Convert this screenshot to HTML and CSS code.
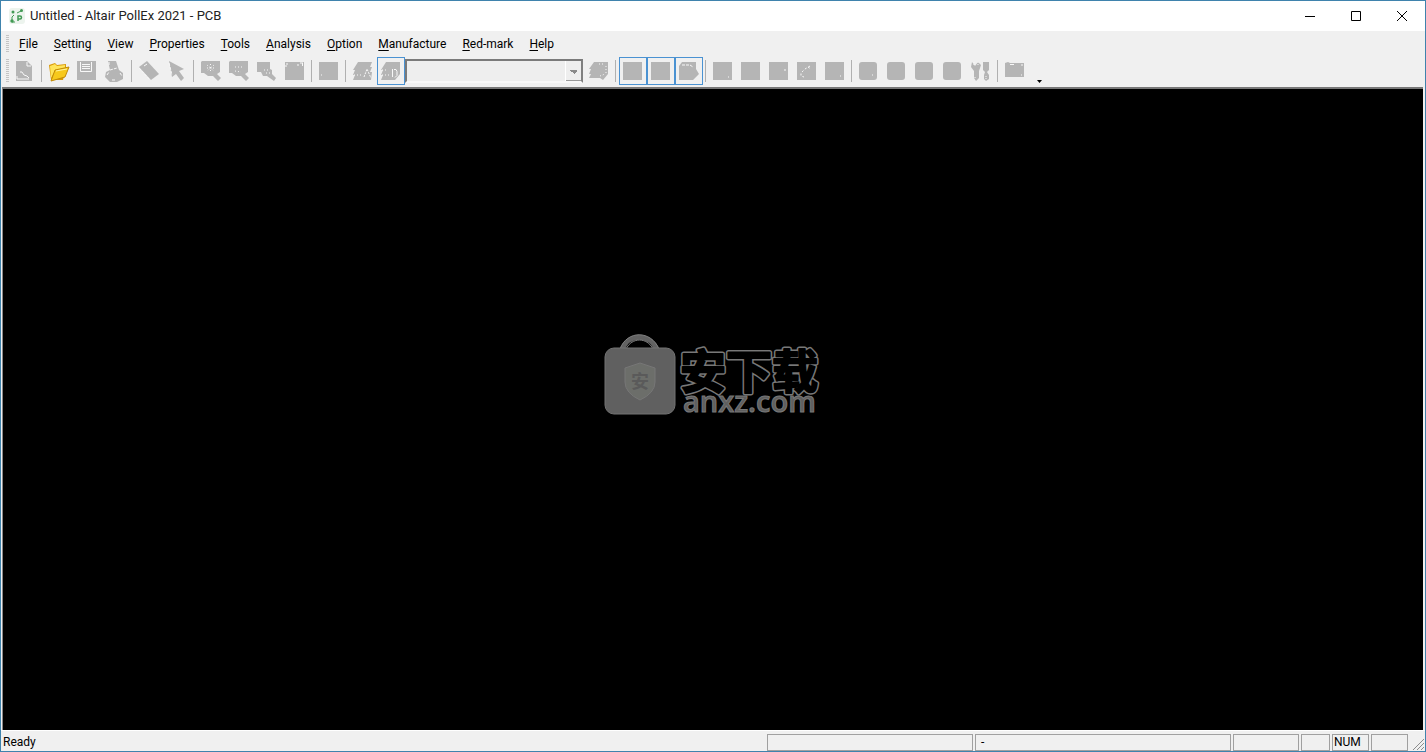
FILE: index.html
```
<!DOCTYPE html>
<html lang="en">
<head>
<meta charset="utf-8">
<title>Untitled - Altair PollEx 2021 - PCB</title>
<link rel="stylesheet" href="styles.css">
</head>
<body>
<svg class="defs" aria-hidden="true">
  <defs>
    <g id="square"><path d="M1 1h19v18H1z"/></g>
    <g id="rounded"><rect x="1" y="1" width="18" height="18" rx="3"/></g>
    <g id="magnifier"><path d="M2 0h18v11l-3 2 4 4-3 3-5-5H8l-4-3H1V1z"/></g>
  </defs>
</svg>
<div class="window">
  <header class="titlebar">
    <svg class="app-icon" viewBox="0 0 16 16" aria-hidden="true">
      <rect width="16" height="16" rx="3" fill="#edf4ee"/>
      <g fill="#439a55"><circle cx="4" cy="4" r="1.500"/><circle cx="12.500" cy="2.500" r="1.500"/><circle cx="3" cy="13" r="1.700"/></g>
      <path d="M12 3 8 5M3 12V9l2-2M3 14h3" fill="none" stroke="#439a55"/>
      <path d="M9 13V8h2a1.500 1.500 0 0 1 0 3H9" fill="none" stroke="#439a55" stroke-width="1.500"/>
    </svg>
    <h1 class="title">Untitled - Altair PollEx 2021 - PCB</h1>
    <div class="caption-buttons">
      <button class="caption" aria-label="Minimize"><svg viewBox="0 0 12 12"><path d="M1 6.500h10"/></svg></button>
      <button class="caption" aria-label="Maximize"><svg viewBox="0 0 12 12"><path d="M1.500 1.500h9v9h-9z"/></svg></button>
      <button class="caption" aria-label="Close"><svg viewBox="0 0 12 12"><path d="m1 1 10 10M11 1 1 11"/></svg></button>
    </div>
  </header>

  <nav class="menubar" aria-label="Main menu">
    <span class="gripper"></span>
    <button class="menu"><u>F</u>ile</button>
    <button class="menu"><u>S</u>etting</button>
    <button class="menu"><u>V</u>iew</button>
    <button class="menu"><u>P</u>roperties</button>
    <button class="menu"><u>T</u>ools</button>
    <button class="menu"><u>A</u>nalysis</button>
    <button class="menu"><u>O</u>ption</button>
    <button class="menu"><u>M</u>anufacture</button>
    <button class="menu"><u>R</u>ed-mark</button>
    <button class="menu"><u>H</u>elp</button>
  </nav>

  <div class="toolbar" role="toolbar" aria-label="Standard">
    <span class="gripper"></span>
    <button class="tool" disabled aria-label="New"><svg viewBox="0 0 22 22"><path d="M2 0h11l5 5v15H2z"/><path class="hi" d="M13 1v4h4M3 15v3h12M6 11h2l2 3 3 1 2 2"/></svg></button>
    <span class="sep"></span>
    <button class="tool" aria-label="Open">
      <svg viewBox="0 0 22 22"><path d="M1 4l6-2 2 2 9-1v5l-3 11H3z" fill="#d99a08"/><path d="M2 5l5-2 2 2 8-1v4L7 10 3 17z" fill="#ffe45a"/><path d="M7 9l14-3-4 10-14 4z" fill="#f7c91c" stroke="#c18a08"/><path d="M8 10l11-2" stroke="#fff5a2" fill="none"/></svg>
    </button>
    <button class="tool" disabled aria-label="Save"><svg viewBox="0 0 22 22"><path d="M1 0h19v19H1z"/><path class="hi" d="M4.500 1v9.500h11V1M6 3.500h8M6 5.500h8M6 7.500h8"/></svg></button>
    <button class="tool" disabled aria-label="Print"><svg viewBox="0 0 22 22"><path d="M4 0h8l3 9 4 3v6l-6 3H6l-5-5 1-5 4-2z"/><path class="hi" stroke-dasharray="3 1" d="M5 1v3M6 9l7-2M3 14l2-3M8 19h4M16 12l2 3"/></svg></button>
    <span class="sep"></span>
    <button class="tool" disabled aria-label="Measure"><svg viewBox="0 0 22 22"><path d="M1 6l8-6 12 13-8 6z"/><path class="hi" stroke-dasharray="3 1" d="M1 7l11 12"/><path class="hi" d="M6 5l3-2"/></svg></button>
    <button class="tool" disabled aria-label="Select"><svg viewBox="0 0 22 22"><path d="M3 0l15 8-5 2 5 7-3 3-5-7-4 3z"/><path class="hi" stroke-dasharray="3 1" d="M3 2l3 12"/></svg></button>
    <span class="sep"></span>
    <button class="tool" disabled aria-label="Zoom in"><svg viewBox="0 0 22 22"><use href="#magnifier"/><path class="hi" stroke-dasharray="1 2" d="M7 7h8M10.500 3v8M7 4l7 6M14 4l-7 6"/></svg></button>
    <button class="tool" disabled aria-label="Zoom out"><svg viewBox="0 0 22 22"><use href="#magnifier"/><path class="hi" stroke-dasharray="1 2" d="M7 6h8M7 10l6 1"/></svg></button>
    <button class="tool" disabled aria-label="Zoom area"><svg viewBox="0 0 22 22"><path d="M1 1h13v7l2 1v4l4 4-2 3-7-5H7l-2-4H1z"/><path class="hi" stroke-dasharray="1 2" d="M8 9h6M10 12h5"/></svg></button>
    <button class="tool" disabled aria-label="Zoom fit"><svg viewBox="0 0 22 22"><use href="#square"/><path class="hi" d="M2 3h2M13 4h2M16 2h3M18.500 2v3M2 4v2"/></svg></button>
    <span class="sep"></span>
    <button class="tool" disabled aria-label="Refresh"><svg viewBox="0 0 22 22"><use href="#square"/><path class="hi" d="M3 14h1"/></svg></button>
    <span class="sep"></span>
    <button class="tool" disabled aria-label="All layers"><svg viewBox="0 0 22 22"><path d="M6 1h14l-2 5h2l-2 5h2l-1 8H1l2-5H1l2-5H1z"/><path class="hi" stroke-dasharray="2 1" d="M12 16l3-8 4 9"/><path class="hi" stroke-dasharray="1 2" d="M2 14h8"/></svg></button>
    <button class="tool on" disabled aria-label="Single layer"><svg viewBox="0 0 22 22"><path d="M6 1h14v12l-5 6H1l2-5H1l2-5H1z"/><path class="hi" d="M12.500 16V8M14 8.500h2l1 2v4l-2 2"/><path class="hi" stroke-dasharray="1 2" d="M2 14h8M2 9h5"/></svg></button>
    <select class="layers" disabled aria-label="Layer"><option></option></select>
    <button class="tool" disabled aria-label="Layer set"><svg viewBox="0 0 22 22"><path d="M6 1h14v12l-5 6-3-2H1l2-4H1l2-5H1z"/><path class="hi" stroke-dasharray="1 2" d="M11 3h5M18 5v8M12 15l5-2"/></svg></button>
    <span class="sep"></span>
    <button class="tool on" disabled aria-label="Top view"><svg viewBox="0 0 22 22"><use href="#square"/></svg></button>
    <button class="tool on" disabled aria-label="Bottom view"><svg viewBox="0 0 22 22"><use href="#square"/></svg></button>
    <button class="tool on" disabled aria-label="Flip board"><svg viewBox="0 0 22 22"><path d="M4 1h14v7l3 5-6 6H1V5z"/><path class="hi" stroke-dasharray="3 1" d="M4 4h8l3 2"/></svg></button>
    <span class="sep"></span>
    <button class="tool" disabled aria-label="Components"><svg viewBox="0 0 22 22"><use href="#square"/><path class="hi" d="M16 16h1"/></svg></button>
    <button class="tool" disabled aria-label="Nets"><svg viewBox="0 0 22 22"><use href="#square"/></svg></button>
    <button class="tool" disabled aria-label="Pins"><svg viewBox="0 0 22 22"><use href="#square"/><path class="hi" d="M17 8v2"/></svg></button>
    <button class="tool" disabled aria-label="Vias"><svg viewBox="0 0 22 22"><use href="#square"/><path class="hi" stroke-dasharray="2 2" d="M14 5l-5 3-4 4v3l3 1M12 6l3 2"/></svg></button>
    <button class="tool" disabled aria-label="Outline"><svg viewBox="0 0 22 22"><use href="#square"/><path class="hi" d="M16 15h1"/></svg></button>
    <span class="sep"></span>
    <button class="tool" disabled aria-label="Logic"><svg viewBox="0 0 22 22"><use href="#rounded"/><path class="hi" d="M14 14h1"/></svg></button>
    <button class="tool" disabled aria-label="Signal"><svg viewBox="0 0 22 22"><use href="#rounded"/></svg></button>
    <button class="tool" disabled aria-label="Power"><svg viewBox="0 0 22 22"><use href="#rounded"/></svg></button>
    <button class="tool" disabled aria-label="Thermal"><svg viewBox="0 0 22 22"><use href="#rounded"/></svg></button>
    <button class="tool" disabled aria-label="Options"><svg viewBox="0 0 22 22"><path d="M2 1l3 4 3-4 3 3-2 6v7l-3 3-2-3v-7L1 6zM13 1h6v8l-2 2 2 3v4l-3 2-2-2v-4l1-3-2-2z"/><path class="hi" stroke-dasharray="1 1" d="M4 1v4M8 1v4M5 16v2M16 15v3"/></svg></button>
    <span class="sep"></span>
    <button class="tool" disabled aria-label="Reports"><svg viewBox="0 0 22 22"><path d="M1 2l3-1 2 1h14v14H1z"/><path class="hi" d="M6 3.500h4M17 4h2M17 14h1"/></svg></button>
    <button class="more" aria-label="Toolbar options"><svg viewBox="0 0 5 3"><path d="M0 0h5L2.500 3z"/></svg></button>
  </div>

  <main class="canvas">
    <svg class="watermark" viewBox="0 0 218 84" role="img" aria-label="安下载 anxz.com">
      <defs><text id="brand" x="76" y="54" class="brand">安下载</text></defs>
      <path d="M18 16C24-1 46-1 53 16" fill="none" stroke="#626262" stroke-width="5"/>
      <path d="M16 15C23-4 47-4 55 15M22 15C28 3 43 3 49 15" fill="none" stroke="#808080"/>
      <rect x="1" y="14" width="70" height="66" rx="9" fill="#606060" stroke="#737373"/>
      <path d="M36 29l15 5v14q0 11-15 18-15-7-15-18V34z" fill="#6c6e6a" stroke="#767676"/>
      <text x="36" y="54" class="badge">安</text>
      <use href="#brand" class="brand-edge"/>
      <use href="#brand" class="brand-body"/>
      <text x="79" y="78" class="domain">anxz.com</text>
    </svg>
  </main>

  <footer class="statusbar">
    <span class="message">Ready</span>
    <span class="pane hint"></span>
    <span class="pane position">-</span>
    <span class="pane unit"></span>
    <span class="pane narrow"></span>
    <span class="pane key">NUM</span>
    <span class="pane key"></span>
    <svg class="size-grip" viewBox="0 0 14 14" aria-hidden="true"><path d="M2 13 13 2M6 13l7-7M10 13l3-3"/></svg>
  </footer>
</div>
</body>
</html>
```
FILE: styles.css
```
* { box-sizing: border-box; }

body {
  margin: 0;
  font: 12px/16px Roboto, "Noto Sans CJK SC", sans-serif;
  color: #000;
}

button {
  padding: 0;
  border: 0;
  background: none;
  font: inherit;
  color: inherit;
}

.defs { position: absolute; width: 0; height: 0; }

.window {
  display: flex;
  flex-direction: column;
  height: 100vh;
  border: 1px solid #3f83ad;
  background: #f0f0f0;
}

.titlebar {
  display: flex;
  align-items: center;
  height: 30px;
  flex: none;
  padding-left: 8px;
  background: #fff;
}
.app-icon { width: 16px; height: 16px; }
.title {
  flex: 1;
  margin: 0 0 0 5px;
  font: 13px/16px Roboto, sans-serif;
  color: #222;
}
.caption-buttons { display: flex; height: 100%; }
.caption {
  display: grid;
  place-items: center;
  width: 46px;
}
.caption svg { width: 12px; height: 12px; }
.caption path { fill: none; stroke: #000; }

.menubar {
  display: flex;
  align-items: center;
  height: 26px;
  flex: none;
  padding-left: 5px;
}
.gripper {
  width: 3px;
  height: 18px;
  background: repeating-linear-gradient(#c4c4c4 0 1px, #f0f0f0 1px 2px);
}
.menu { padding: 0 8px; }
.menu u { text-underline-offset: 2px; }
.menubar .gripper + .menu { padding-left: 10px; }

.toolbar {
  display: flex;
  align-items: center;
  height: 30px;
  flex: none;
  padding: 0 0 2px 5px;
}
.toolbar .gripper { height: 24px; margin-right: 2px; }
.tool {
  display: grid;
  place-items: center;
  flex: none;
  width: 28px;
  height: 28px;
  padding-top: 2px;
}
.tool.on { border: 1px solid #4a92d2; }
.tool svg {
  width: 22px;
  height: 22px;
  fill: #b5b5b5;
}
.tool .hi { fill: none; stroke: #f8f8f8; }
.sep {
  width: 1px;
  height: 22px;
  margin: 0 3px 0 2px;
  background: #b0b0b0;
}
.layers {
  appearance: none;
  width: 178px;
  height: 24px;
  margin-right: 2px;
  border: 2px solid;
  border-color: #7a7a7a #808080 #f8f8f8 #7a7a7a;
  border-radius: 0;
  opacity: 1;
  background:
    conic-gradient(from 315deg at 50% 100%, #8a8a8a 90deg, transparent 0) right 3px top 9px / 8px 4px no-repeat,
    linear-gradient(#fff, #fff) right 15px top 0 / 1px 20px no-repeat,
    linear-gradient(#999, #999) right 0 bottom 0 / 15px 1px no-repeat,
    #eee;
}
.more { align-self: flex-end; margin-left: 8px; line-height: 0; }
.more svg { display: block; width: 5px; height: 3px; margin-bottom: 2px; }

.canvas {
  display: grid;
  place-items: center;
  flex: 1;
  min-height: 0;
  margin: 0 2px 0 1px;
  border-top: 2px solid #777;
  border-left: 1px solid #8a8a8a;
  padding-bottom: 68px;
  background: #000;
}
.watermark { width: 218px; height: 84px; overflow: visible; }
.brand { font: 700 46px "Noto Sans CJK SC", sans-serif; }
.brand-edge { fill: #787878; stroke: #787878; stroke-width: 5px; stroke-linejoin: round; }
.brand-body { fill: #000; stroke: #000; stroke-width: 2px; stroke-linejoin: round; }
.badge { font: 700 18px "Noto Sans CJK SC", sans-serif; fill: #5a5a5a; text-anchor: middle; }
.domain { font: 600 29px "Open Sans", sans-serif; fill: #5f5f5f; stroke: #777; }

.statusbar {
  display: flex;
  align-items: flex-end;
  gap: 2px;
  height: 21px;
  flex: none;
  border-top: 1px solid #fff;
}
.message { flex: 1; padding-left: 2px; line-height: 17px; }
.pane {
  height: 17px;
  flex: none;
  border: 1px solid #a0a0a0;
  line-height: 15px;
}
.hint { width: 206px; }
.position { width: 256px; padding-left: 5px; }
.unit { width: 66px; }
.narrow { width: 29px; }
.key { width: 37px; padding-left: 1px; }
.size-grip { width: 14px; height: 14px; margin-left: 1px; }
.size-grip path { fill: none; stroke: #8c8c8c; stroke-width: 1px; }
```
